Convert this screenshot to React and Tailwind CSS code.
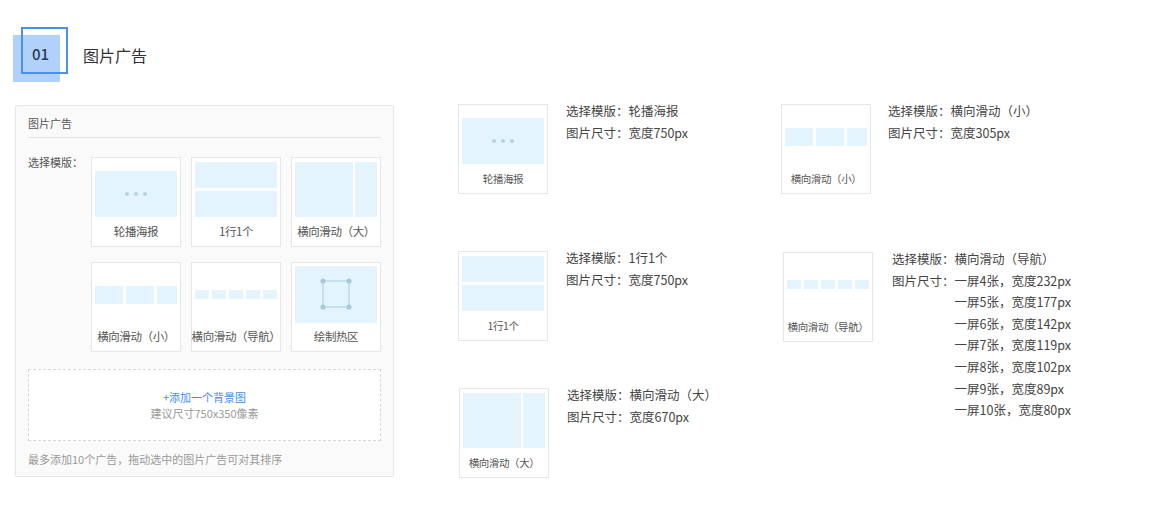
import React from "react";

const FONT = { fontFamily: '"Noto Sans CJK SC", "Noto Sans", sans-serif' };
const BLUE = "bg-[#e4f4fd]";

function Preview({ type }) {
  if (type === "carousel") {
    return (
      <div className={`mt-[8px] w-full h-[46px] ${BLUE} flex items-center justify-center gap-[5px]`}>
        <span className="w-[4px] h-[4px] rounded-full bg-[#b6d3dc]"></span>
        <span className="w-[4px] h-[4px] rounded-full bg-[#b6d3dc]"></span>
        <span className="w-[4px] h-[4px] rounded-full bg-[#b6d3dc]"></span>
      </div>
    );
  }
  if (type === "row") {
    return (
      <div className="w-full flex flex-col gap-[3px]">
        <div className={`h-[26px] ${BLUE}`}></div>
        <div className={`h-[26px] ${BLUE}`}></div>
      </div>
    );
  }
  if (type === "big") {
    return (
      <div className="w-full h-[55px] flex gap-[2px]">
        <div className={`flex-1 ${BLUE}`}></div>
        <div className={`w-[22px] ${BLUE}`}></div>
      </div>
    );
  }
  if (type === "small") {
    return (
      <div className="w-full h-[18px] flex gap-[3px]">
        <div className={`w-[28px] ${BLUE}`}></div>
        <div className={`w-[28px] ${BLUE}`}></div>
        <div className={`flex-1 ${BLUE}`}></div>
      </div>
    );
  }
  if (type === "nav") {
    return (
      <div className="w-full h-[9px] flex gap-[3px]">
        <div className={`w-[14px] ${BLUE}`}></div>
        <div className={`w-[14px] ${BLUE}`}></div>
        <div className={`w-[14px] ${BLUE}`}></div>
        <div className={`w-[14px] ${BLUE}`}></div>
        <div className={`flex-1 ${BLUE}`}></div>
      </div>
    );
  }
  // hot zone
  return (
    <div className={`w-full h-[57px] -mt-[1px] ${BLUE} flex items-center justify-center`}>
      <svg width="34" height="34" viewBox="0 0 34 34">
        <rect x="4" y="4" width="26" height="26" fill="none" stroke="#a9cbd9" strokeWidth="1" />
        <circle cx="4" cy="4" r="2.6" fill="#a9c9d8" />
        <circle cx="30" cy="4" r="2.6" fill="#a9c9d8" />
        <circle cx="4" cy="30" r="2.6" fill="#a9c9d8" />
        <circle cx="30" cy="30" r="2.6" fill="#a9c9d8" />
      </svg>
    </div>
  );
}

function Card({ type, label, small }) {
  return (
    <div className="w-[90px] h-[90px] border border-[#e6e6e6] bg-white flex flex-col px-[3px] pt-[3px]">
      <div className="h-[57px] flex items-center">
        <Preview type={type} />
      </div>
      <div
        className={`-mx-[3px] flex-1 flex items-center justify-center whitespace-nowrap tracking-[-0.4px] text-[#555] ${
          small ? "text-[10.5px]" : "text-[11.5px]"
        }`}
      >
        {label}
      </div>
    </div>
  );
}

function Spec({ type, label, mode, sizes, gap = "ml-[18px]" }) {
  return (
    <div className="flex items-start">
      <Card type={type} label={label} small />
      <div className={`${gap} -mt-[4px] text-[12.5px] leading-[21.6px] text-[#444]`}>
        <div>选择模版：{mode}</div>
        <div className="flex">
          <span>图片尺寸：</span>
          <div className="flex flex-col">
            {sizes.map((s) => (
              <span key={s}>{s}</span>
            ))}
          </div>
        </div>
      </div>
    </div>
  );
}

export default function App() {
  return (
    <div className="w-full h-[514px] bg-white pl-[13px] pt-[27px]" style={FONT}>
      {/* Header */}
      <div className="flex items-center h-[55px]">
        <div className="relative w-[55px] h-[55px]">
          <div className="absolute left-0 top-[8px] w-[47px] h-[47px] bg-[#b2d1fa]"></div>
          <div className="absolute left-[8px] top-0 w-[47px] h-[47px] border-2 border-[#4b8ff2]"></div>
          <div className="absolute left-[8px] top-[8px] w-[39px] h-[39px] flex items-center justify-center text-[15px] font-medium text-[#2a3b55]">
            01
          </div>
        </div>
        <div className="ml-[15px] text-[16px] text-[#333]">图片广告</div>
      </div>

      <div className="flex mt-[23px]">
        {/* Left panel */}
        <div className="ml-[2px] w-[379px] h-[372px] border border-[#e6e6e6] rounded-[2px] bg-[#fafafa] px-[12px] pt-[10px] flex flex-col">
          <div className="text-[11px] leading-[14px] text-[#555] pb-[7px] border-b border-[#e3e3e3]">图片广告</div>
          <div className="flex mt-[19px]">
            <div className="w-[64px] text-[11px] leading-[11px] text-[#555]">选择模版：</div>
            <div className="grid grid-cols-[90px_90px_90px] gap-x-[10px] gap-y-[15px]">
              <Card type="carousel" label="轮播海报" />
              <Card type="row" label="1行1个" />
              <Card type="big" label="横向滑动（大）" />
              <Card type="small" label="横向滑动（小）" />
              <Card type="nav" label="横向滑动（导航）" />
              <Card type="hot" label="绘制热区" />
            </div>
          </div>
          <div className="mt-[17px] h-[72px] border border-dashed border-[#d6d6d6] bg-white flex flex-col items-center justify-center text-[11px] leading-[16px]">
            <div className="text-[#3d8df2]">+添加一个背景图</div>
            <div className="text-[#999]">建议尺寸750x350像素</div>
          </div>
          <div className="mt-[11px] text-[11px] leading-[14px] text-[#999]">最多添加10个广告，拖动选中的图片广告可对其排序</div>
        </div>

        {/* Right specs */}
        <div className="ml-[64px] -mt-[1px] flex">
          <div className="w-[323px] flex flex-col">
            <Spec type="carousel" label="轮播海报" mode="轮播海报" sizes={["宽度750px"]} />
            <div className="mt-[57px]">
              <Spec type="row" label="1行1个" mode="1行1个" sizes={["宽度750px"]} />
            </div>
            <div className="mt-[47px] ml-[1px]">
              <Spec type="big" label="横向滑动（大）" mode="横向滑动（大）" sizes={["宽度670px"]} />
            </div>
          </div>
          <div className="flex flex-col">
            <Spec type="small" label="横向滑动（小）" mode="横向滑动（小）" sizes={["宽度305px"]} gap="ml-[17px]" />
            <div className="mt-[58px] ml-[2px]">
              <Spec
                type="nav"
                label="横向滑动（导航）"
                mode="横向滑动（导航）"
                gap="ml-[19px]"
                sizes={[
                  "一屏4张，宽度232px",
                  "一屏5张，宽度177px",
                  "一屏6张，宽度142px",
                  "一屏7张，宽度119px",
                  "一屏8张，宽度102px",
                  "一屏9张，宽度89px",
                  "一屏10张，宽度80px",
                ]}
              />
            </div>
          </div>
        </div>
      </div>
    </div>
  );
}
